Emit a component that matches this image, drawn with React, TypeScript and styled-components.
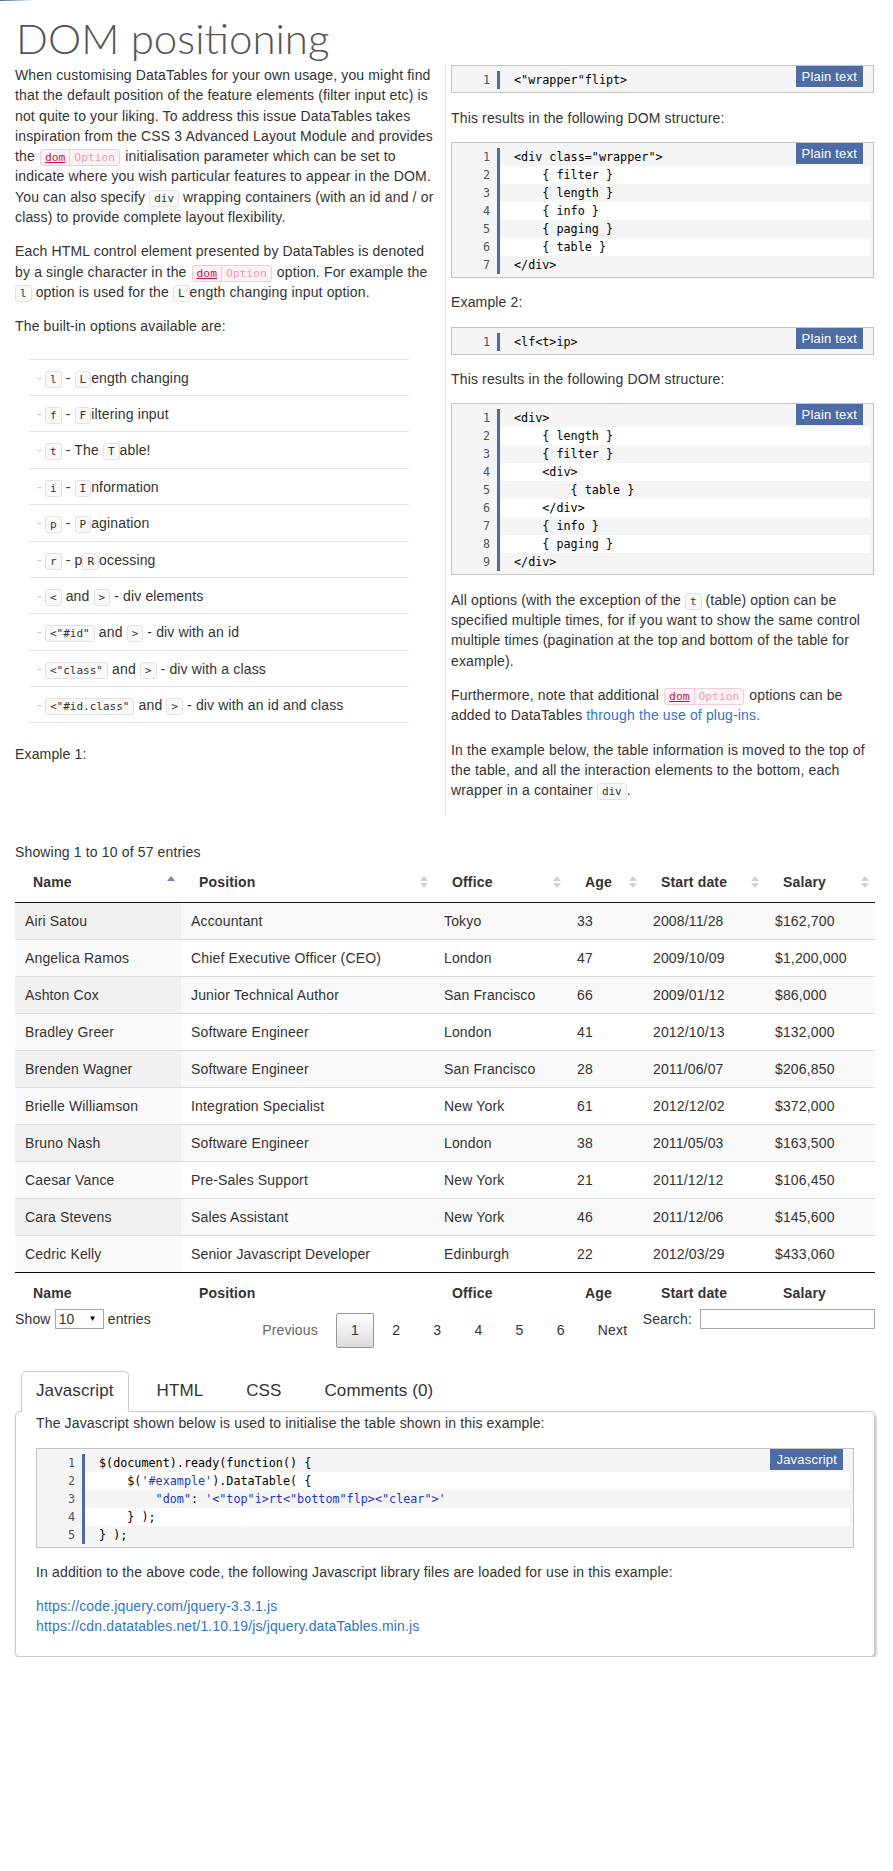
import React from "react"
import styled, { createGlobalStyle, css } from "styled-components"

const GlobalStyle = createGlobalStyle`
  body {
    margin: 0;
    background: #fff;
    font-family: "Liberation Sans", Arial, sans-serif;
    font-size: 14px;
    line-height: 20.3px;
    letter-spacing: 0.15px;
    color: #333;
  }
`

const BLUE = "#4e6ca3"
const MONO = `"DejaVu Sans Mono", "Liberation Mono", monospace`

const TopBar = styled.div`
  height: 1px;
  background: linear-gradient(to right, ${BLUE}, rgba(78, 108, 163, 0) 34px);
`

const Page = styled.div`
  width: 860px;
  margin-left: 15px;
`

const Title = styled.h1`
  margin: 10px 0 0 1px;
  font-family: Lato, "Open Sans", sans-serif;
  font-weight: 300;
  font-size: 42px;
  line-height: 54px;
  letter-spacing: 0;
  color: #555;
`

const Columns = styled.div`
  display: grid;
  grid-template-columns: 430px 430px;
`

const LeftCol = styled.div`
  padding-right: 8px;
`

const RightCol = styled.div`
  border-left: 1px solid #e4e4e4;
  padding: 0 1px 0 5px;
`

const Para = styled.p`
  margin: 0 0 14px;
`

const Link = styled.a`
  color: #3174c7;
  text-decoration: none;
`

const Tag = styled.code`
  display: inline-block;
  font-family: ${MONO};
  font-size: 11px;
  line-height: 15px;
  letter-spacing: 0;
  padding: 0 4px;
  border: 1px solid #e2e2e2;
  border-radius: 3px;
  background: #f9f9f9;
  color: #333;
`

const OptionTag = styled.code`
  display: inline-block;
  margin: 0 1px;
  font-family: ${MONO};
  font-size: 11.3px;
  line-height: 15px;
  letter-spacing: 0;
  border: 1px solid #f4cbd6;
  border-radius: 3px;
  background: #fdf3f6;
`

const OptionName = styled.span`
  display: inline-block;
  padding: 0 4px;
  color: #cc1144;
  text-decoration: underline;
  border-right: 1px solid #f4cbd6;
`

const OptionKind = styled.span`
  display: inline-block;
  padding: 0 4px;
  color: #eb9cb2;
`

const DomOption = () => (
  <OptionTag>
    <OptionName>dom</OptionName>
    <OptionKind>Option</OptionKind>
  </OptionTag>
)

const OptionList = styled.ul`
  list-style: none;
  margin: 22px 0 21px 14px;
  padding: 0;
  width: 380px;
`

const OptionItem = styled.li`
  padding: 8px 0 7.1px 8px;
  border-top: 1px solid #e4e4e4;
  &:last-child {
    border-bottom: 1px solid #e4e4e4;
  }
  &::before {
    content: "-";
    display: inline-block;
    width: 8px;
    color: #c4c4c4;
  }
`

/* code blocks */

const CodeBox = styled.div`
  position: relative;
  margin: 0 0 14.5px;
  padding: 5px 3px 3px 0;
  border: 1px solid #c4c4c4;
  background: #f5f5f5;
  font-family: ${MONO};
  font-size: 11.75px;
  line-height: 18px;
  letter-spacing: 0;
  color: #000;
`

const CodeLabel = styled.span`
  position: absolute;
  top: 0;
  right: 10px;
  padding: 0 6px;
  background: ${BLUE};
  color: #fff;
  font-family: "Liberation Sans", Arial, sans-serif;
  font-size: 13px;
  line-height: 21px;
  letter-spacing: 0.2px;
`

const CodeRow = styled.div`
  display: flex;
`

const LineNo = styled.span`
  flex: none;
  box-sizing: border-box;
  width: 45px;
  padding-right: 7px;
  text-align: right;
  color: #555;
`

const LineText = styled.span<{ $even: boolean }>`
  flex: 1;
  padding-left: 14px;
  border-left: 3px solid ${BLUE};
  white-space: pre;
  ${(p) =>
    p.$even &&
    css`
      background: #fff;
    `}
`

const Str = styled.span`
  color: #2434c8;
`

const CodeBlock = ({ lines, label }: { lines: React.ReactNode[]; label: string }) => (
  <CodeBox>
    {lines.map((line, i) => (
      <CodeRow key={i}>
        <LineNo>{i + 1}</LineNo>
        <LineText $even={i % 2 === 1}>{line}</LineText>
      </CodeRow>
    ))}
    <CodeLabel>{label}</CodeLabel>
  </CodeBox>
)

/* table */

const TableSection = styled.section`
  margin-top: 27px;
`

const DataTable = styled.table`
  width: 100%;
  table-layout: fixed;
  border-collapse: separate;
  border-spacing: 0;
  font-size: 14px;
  line-height: 20px;
`

const HeadCell = styled.th`
  padding: 10px 6px 10px 18px;
  text-align: left;
  font-weight: bold;
  border-bottom: 1px solid #111;
`

const HeadInner = styled.div`
  display: flex;
  align-items: center;
  justify-content: space-between;
`

const FootCell = styled.th`
  padding: 10px 18px 6px;
  text-align: left;
  font-weight: bold;
  border-top: 1px solid #111;
`

const BodyRow = styled.tr<{ $odd: boolean }>`
  background: ${(p) => (p.$odd ? "#f9f9f9" : "#fff")};
  &:not(:first-child) td {
    border-top: 1px solid #ddd;
  }
`

const BodyCell = styled.td<{ $sorted?: boolean; $odd: boolean }>`
  padding: 8px 10px;
  white-space: nowrap;
  ${(p) =>
    p.$sorted &&
    css`
      background: ${p.$odd ? "#f1f1f1" : "#fafafa"};
    `}
`

const SortIcon = ({ active }: { active?: boolean }) => (
  <svg width="8" height="14" viewBox="0 0 8 14">
    <polygon points="0,6 4,1 8,6" fill={active ? "#7c7cd6" : "#d2d2d2"} />
    {!active && <polygon points="0,8 4,13 8,8" fill="#d2d2d2" />}
  </svg>
)

const Controls = styled.div`
  display: flex;
  align-items: flex-start;
  line-height: 20px;
`

const Length = styled.div`
  flex: 1;
`

const SelectBox = styled.span`
  display: inline-flex;
  align-items: center;
  justify-content: space-between;
  box-sizing: border-box;
  width: 49px;
  height: 20px;
  padding: 0 6px 0 3px;
  border: 1px solid #a6a6a6;
  vertical-align: top;
  background: #fff;
`

const Caret = styled.span`
  font-size: 8px;
  color: #000;
`

const Paging = styled.div`
  display: flex;
  gap: 2.2px;
  padding-top: 4px;
`

const PageButton = styled.span<{ $current?: boolean; $disabled?: boolean }>`
  padding: 7px 14.5px;
  line-height: 19px;
  border: 1px solid transparent;
  border-radius: 2px;
  color: ${(p) => (p.$disabled ? "#666" : "#333")};
  ${(p) =>
    p.$current &&
    css`
      border-color: #979797;
      background: linear-gradient(to bottom, #fff 0%, #dcdcdc 100%);
    `}
`

const Search = styled.label`
  display: flex;
  align-items: center;
`

const SearchInput = styled.input`
  box-sizing: border-box;
  width: 175px;
  height: 20px;
  margin: 0 0 0 8px;
  border: 1px solid #a9a9a9;
  padding: 0 3px;
`

/* tabs */

const TabList = styled.ul`
  list-style: none;
  display: flex;
  gap: 13px;
  margin: 23px 0 0;
  padding: 0 0 0 6px;
`

const Tab = styled.li<{ $active?: boolean }>`
  position: relative;
  padding: 9px 14px 10px;
  font-size: 17px;
  line-height: 20px;
  letter-spacing: 0.1px;
  border: 1px solid transparent;
  border-bottom: none;
  border-radius: 5px 5px 0 0;
  ${(p) =>
    p.$active &&
    css`
      z-index: 1;
      margin-bottom: -1px;
      padding-bottom: 11px;
      border-color: #ccc;
      background: #fff;
    `}
`

const Panel = styled.div`
  padding: 1px 20px 20px;
  border: 1px solid #ccc;
  border-radius: 5px;
  box-shadow: 1px 2px 3px rgba(0, 0, 0, 0.3);
  line-height: 20px;
`

const PanelText = styled.p<{ $gap?: number }>`
  margin: 0 0 ${(p) => p.$gap ?? 0}px;
`

const Links = styled.p`
  margin: 14px 0 0;
  display: flex;
  flex-direction: column;
`

const rows = [
  ["Airi Satou", "Accountant", "Tokyo", "33", "2008/11/28", "$162,700"],
  ["Angelica Ramos", "Chief Executive Officer (CEO)", "London", "47", "2009/10/09", "$1,200,000"],
  ["Ashton Cox", "Junior Technical Author", "San Francisco", "66", "2009/01/12", "$86,000"],
  ["Bradley Greer", "Software Engineer", "London", "41", "2012/10/13", "$132,000"],
  ["Brenden Wagner", "Software Engineer", "San Francisco", "28", "2011/06/07", "$206,850"],
  ["Brielle Williamson", "Integration Specialist", "New York", "61", "2012/12/02", "$372,000"],
  ["Bruno Nash", "Software Engineer", "London", "38", "2011/05/03", "$163,500"],
  ["Caesar Vance", "Pre-Sales Support", "New York", "21", "2011/12/12", "$106,450"],
  ["Cara Stevens", "Sales Assistant", "New York", "46", "2011/12/06", "$145,600"],
  ["Cedric Kelly", "Senior Javascript Developer", "Edinburgh", "22", "2012/03/29", "$433,060"],
]

const columns = ["Name", "Position", "Office", "Age", "Start date", "Salary"]
const widths = [166, 253, 133, 76, 122, 110]

const App = () => {
  return (
    <>
      <GlobalStyle />
      <TopBar />
      <Page>
        <Title>DOM positioning</Title>

        <Columns>
          <LeftCol>
            <Para>
              When customising DataTables for your own usage, you might find that the default
              position of the feature elements (filter input etc) is not quite to your liking. To
              address this issue DataTables takes inspiration from the CSS 3 Advanced Layout Module
              and provides the <DomOption /> initialisation parameter which can be set to indicate
              where you wish particular features to appear in the DOM. You can also specify{" "}
              <Tag>div</Tag> wrapping containers (with an id and / or class) to provide complete
              layout flexibility.
            </Para>
            <Para>
              Each HTML control element presented by DataTables is denoted by a single character in
              the <DomOption /> option. For example the <Tag>l</Tag> option is used for the{" "}
              <Tag>L</Tag>ength changing input option.
            </Para>
            <Para>The built-in options available are:</Para>
            <OptionList>
              <OptionItem>
                <Tag>l</Tag> - <Tag>L</Tag>ength changing
              </OptionItem>
              <OptionItem>
                <Tag>f</Tag> - <Tag>F</Tag>iltering input
              </OptionItem>
              <OptionItem>
                <Tag>t</Tag> - The <Tag>T</Tag>able!
              </OptionItem>
              <OptionItem>
                <Tag>i</Tag> - <Tag>I</Tag>nformation
              </OptionItem>
              <OptionItem>
                <Tag>p</Tag> - <Tag>P</Tag>agination
              </OptionItem>
              <OptionItem>
                <Tag>r</Tag> - p<Tag>R</Tag>ocessing
              </OptionItem>
              <OptionItem>
                <Tag>&lt;</Tag> and <Tag>&gt;</Tag> - div elements
              </OptionItem>
              <OptionItem>
                <Tag>&lt;"#id"</Tag> and <Tag>&gt;</Tag> - div with an id
              </OptionItem>
              <OptionItem>
                <Tag>&lt;"class"</Tag> and <Tag>&gt;</Tag> - div with a class
              </OptionItem>
              <OptionItem>
                <Tag>&lt;"#id.class"</Tag> and <Tag>&gt;</Tag> - div with an id and class
              </OptionItem>
            </OptionList>
            <Para>Example 1:</Para>
          </LeftCol>

          <RightCol>
            <CodeBlock label="Plain text" lines={['<"wrapper"flipt>']} />
            <Para>This results in the following DOM structure:</Para>
            <CodeBlock
              label="Plain text"
              lines={[
                '<div class="wrapper">',
                "    { filter }",
                "    { length }",
                "    { info }",
                "    { paging }",
                "    { table }",
                "</div>",
              ]}
            />
            <Para>Example 2:</Para>
            <CodeBlock label="Plain text" lines={["<lf<t>ip>"]} />
            <Para>This results in the following DOM structure:</Para>
            <CodeBlock
              label="Plain text"
              lines={[
                "<div>",
                "    { length }",
                "    { filter }",
                "    <div>",
                "        { table }",
                "    </div>",
                "    { info }",
                "    { paging }",
                "</div>",
              ]}
            />
            <Para>
              All options (with the exception of the <Tag>t</Tag> (table) option can be specified
              multiple times, for if you want to show the same control multiple times (pagination at
              the top and bottom of the table for example).
            </Para>
            <Para>
              Furthermore, note that additional <DomOption /> options can be added to DataTables{" "}
              <Link href="#">through the use of plug-ins.</Link>
            </Para>
            <Para>
              In the example below, the table information is moved to the top of the table, and all
              the interaction elements to the bottom, each wrapper in a container <Tag>div</Tag>.
            </Para>
          </RightCol>
        </Columns>

        <TableSection>
          <div>Showing 1 to 10 of 57 entries</div>
          <DataTable>
            <colgroup>
              {widths.map((w, i) => (
                <col key={i} style={{ width: w }} />
              ))}
            </colgroup>
            <thead>
              <tr>
                {columns.map((c, i) => (
                  <HeadCell key={c}>
                    <HeadInner>
                      <span>{c}</span>
                      <SortIcon active={i === 0} />
                    </HeadInner>
                  </HeadCell>
                ))}
              </tr>
            </thead>
            <tbody>
              {rows.map((r, ri) => (
                <BodyRow key={r[0]} $odd={ri % 2 === 0}>
                  {r.map((v, ci) => (
                    <BodyCell key={ci} $sorted={ci === 0} $odd={ri % 2 === 0}>
                      {v}
                    </BodyCell>
                  ))}
                </BodyRow>
              ))}
            </tbody>
            <tfoot>
              <tr>
                {columns.map((c) => (
                  <FootCell key={c}>{c}</FootCell>
                ))}
              </tr>
            </tfoot>
          </DataTable>

          <Controls>
            <Length>
              Show{" "}
              <SelectBox>
                10<Caret>▼</Caret>
              </SelectBox>{" "}
              entries
            </Length>
            <Paging>
              <PageButton $disabled>Previous</PageButton>
              <PageButton $current>1</PageButton>
              <PageButton>2</PageButton>
              <PageButton>3</PageButton>
              <PageButton>4</PageButton>
              <PageButton>5</PageButton>
              <PageButton>6</PageButton>
              <PageButton>Next</PageButton>
            </Paging>
            <Search>
              Search:
              <SearchInput type="search" />
            </Search>
          </Controls>
        </TableSection>

        <TabList>
          <Tab $active>Javascript</Tab>
          <Tab>HTML</Tab>
          <Tab>CSS</Tab>
          <Tab>Comments (0)</Tab>
        </TabList>
        <Panel>
          <PanelText $gap={15}>
            The Javascript shown below is used to initialise the table shown in this example:
          </PanelText>
          <CodeBlock
            label="Javascript"
            lines={[
              "$(document).ready(function() {",
              <>
                {"    $("}
                <Str>'#example'</Str>
                {").DataTable( {"}
              </>,
              <>
                {"        "}
                <Str>"dom"</Str>
                {": "}
                <Str>'&lt;"top"i&gt;rt&lt;"bottom"flp&gt;&lt;"clear"&gt;'</Str>
              </>,
              "    } );",
              "} );",
            ]}
          />
          <PanelText>
            In addition to the above code, the following Javascript library files are loaded for
            use in this example:
          </PanelText>
          <Links>
            <Link href="#">https://code.jquery.com/jquery-3.3.1.js</Link>
            <Link href="#">https://cdn.datatables.net/1.10.19/js/jquery.dataTables.min.js</Link>
          </Links>
        </Panel>
      </Page>
    </>
  )
}

export default App
